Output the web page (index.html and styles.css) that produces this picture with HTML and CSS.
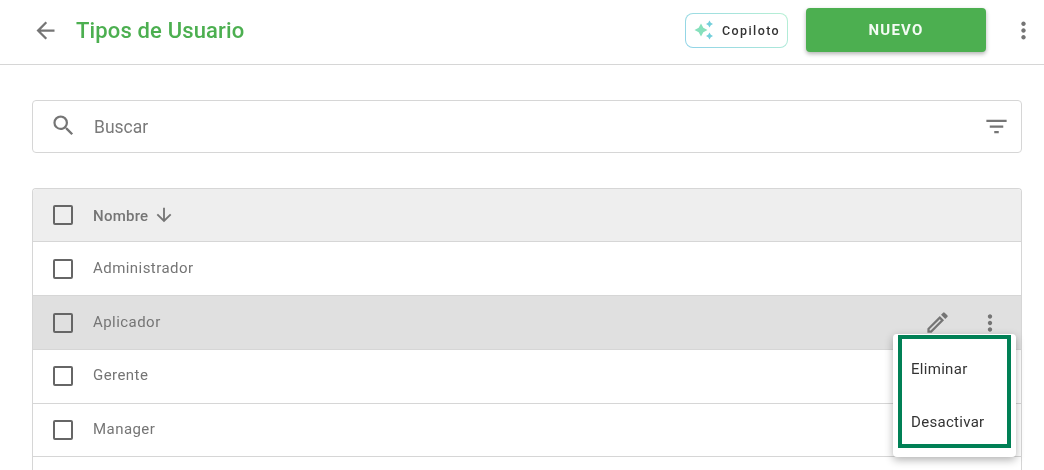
FILE: index.html
```html
<!DOCTYPE html>
<html>

<head>
  <meta charset="utf-8">
  <meta name="viewport" content="width=device-width">
  <title>Tipos de Usuario</title>
  <link rel="stylesheet" href="styles.css">
</head>

<body>

  <header class="topbar">
    <svg class="back-icon" width="27" height="27" viewBox="0 0 24 24">
      <path d="M20 11H7.83l5.59-5.59L12 4l-8 8 8 8 1.41-1.41L7.83 13H20v-2z" />
    </svg>
    <h1 class="title">Tipos de Usuario</h1>
    <button class="copilot">
      <svg width="22" height="22" viewBox="0 0 22 22">
        <path fill="#86e0bc" d="M8 4.5 10.3 8.7 14.5 11 10.3 13.3 8 17.5 5.7 13.3 1.5 11 5.7 8.7z" />
        <path fill="#74cfdb" d="M16.5 1.5 17.8 3.7 20 5 17.8 6.3 16.5 8.5 15.2 6.3 13 5 15.2 3.7z" />
        <path fill="#74cfdb" d="M16.5 13.5 17.8 15.7 20 17 17.8 18.3 16.5 20.5 15.2 18.3 13 17 15.2 15.7z" />
      </svg>
      <span>Copiloto</span>
    </button>
    <button class="btn-new">NUEVO</button>
    <svg class="more-icon" width="27" height="27" viewBox="0 0 24 24">
      <path d="M12 8c1.1 0 2-.9 2-2s-.9-2-2-2-2 .9-2 2 .9 2 2 2zm0 2c-1.1 0-2 .9-2 2s.9 2 2 2 2-.9 2-2-.9-2-2-2zm0 6c-1.1 0-2 .9-2 2s.9 2 2 2 2-.9 2-2-.9-2-2-2z" />
    </svg>
  </header>

  <main class="content">
    <div class="search">
      <svg class="search-icon" width="27" height="27" viewBox="0 0 24 24">
        <path d="M15.5 14h-.79l-.28-.27A6.47 6.47 0 0 0 16 9.5 6.5 6.5 0 1 0 9.5 16c1.61 0 3.09-.59 4.23-1.57l.27.28v.79l5 4.99L20.49 19l-4.99-5zm-6 0C7.01 14 5 11.99 5 9.5S7.01 5 9.5 5 14 7.01 14 9.5 11.99 14 9.5 14z" />
      </svg>
      <span class="search-text">Buscar</span>
      <svg class="filter-icon" width="27" height="27" viewBox="0 0 24 24">
        <path d="M10 18h4v-2h-4v2zM3 6v2h18V6H3zm3 7h12v-2H6v2z" />
      </svg>
    </div>

    <div class="table">
      <div class="row row-head">
        <span class="check"></span>
        <span class="cell-head">Nombre</span>
        <svg class="sort-icon" width="22" height="22" viewBox="0 0 24 24">
          <path d="M20 12l-1.41-1.41L13 16.17V4h-2v12.17l-5.58-5.59L4 12l8 8 8-8z" />
        </svg>
      </div>
      <div class="row">
        <span class="check"></span>
        <span class="cell">Administrador</span>
      </div>
      <div class="row row-active">
        <span class="check"></span>
        <span class="cell">Aplicador</span>
        <div class="row-actions">
          <svg width="27" height="27" viewBox="0 0 24 24">
            <path d="M3 17.25V21h3.75L17.81 9.94l-3.75-3.75L3 17.25zM5.92 19H5v-.92l9.06-9.06.92.92L5.92 19zM20.71 7.04a1 1 0 0 0 0-1.41l-2.34-2.34a1 1 0 0 0-1.41 0l-1.83 1.83 3.75 3.75 1.83-1.83z" />
          </svg>
          <svg width="26" height="26" viewBox="0 0 24 24">
            <path d="M12 8c1.1 0 2-.9 2-2s-.9-2-2-2-2 .9-2 2 .9 2 2 2zm0 2c-1.1 0-2 .9-2 2s.9 2 2 2 2-.9 2-2-.9-2-2-2zm0 6c-1.1 0-2 .9-2 2s.9 2 2 2 2-.9 2-2-.9-2-2-2z" />
          </svg>
        </div>
      </div>
      <div class="row">
        <span class="check"></span>
        <span class="cell">Gerente</span>
      </div>
      <div class="row">
        <span class="check"></span>
        <span class="cell">Manager</span>
      </div>
      <div class="row row-cut"></div>
    </div>
  </main>

  <div class="menu">
    <div class="menu-mark">
      <div class="menu-item">Eliminar</div>
      <div class="menu-item">Desactivar</div>
    </div>
  </div>

</body>

</html>
```

FILE: styles.css
```css
html,
body {
  height: 470px;
  overflow: hidden;
}

body {
  margin: 0;
  background: #ffffff;
  font-family: Roboto, "Liberation Sans", sans-serif;
  color: #757575;
  position: relative;
}

svg {
  display: block;
  flex: none;
  fill: #757575;
}

/* own layers, so the text is smoothed in grey */
.topbar,
.content,
.menu-mark {
  will-change: transform;
}

.topbar {
  height: 60px;
  border-bottom: 1px solid #d6d6d6;
  display: flex;
  align-items: center;
  padding: 0 7px 4px 32px;
}

.title {
  margin: 0 0 0 17px;
  flex: 1;
  font-size: 22px;
  font-weight: 500;
  letter-spacing: 0.15px;
  color: #4caf50;
}

.copilot {
  width: 103px;
  height: 35px;
  margin: 0 18px 0 0;
  padding: 0 0 0 7px;
  display: flex;
  align-items: center;
  gap: 7px;
  background: linear-gradient(#ffffff, #ffffff) padding-box,
    linear-gradient(45deg, #8fd3e8, #b8f0d4) border-box;
  border: 1px solid transparent;
  border-radius: 8px;
  font-family: inherit;
  font-size: 12.5px;
  font-weight: 500;
  letter-spacing: 1.4px;
  color: #333333;
}

.btn-new {
  width: 180px;
  height: 44px;
  margin: 0 24px 0 0;
  padding: 0;
  background: #4caf50;
  border: none;
  border-radius: 4px;
  box-shadow: 0 2px 4px rgba(0, 0, 0, 0.3);
  font-family: inherit;
  font-size: 15px;
  font-weight: 700;
  letter-spacing: 1.2px;
  color: #f4fbf4;
}

.content {
  padding: 35px 22px 0 32px;
}

.search {
  height: 51px;
  border: 1px solid #d6d6d6;
  border-radius: 4px;
  display: flex;
  align-items: center;
  padding: 0 11.5px 0 17px;
}

.search-icon {
  margin-bottom: 2px;
}

.search-text {
  flex: 1;
  margin-left: 17px;
  font-size: 17.5px;
  color: #7a7a7a;
}

.filter-icon {
  margin-bottom: 1px;
}

.table {
  margin-top: 35px;
  border: 1px solid #d6d6d6;
  border-bottom: none;
  border-radius: 4px 4px 0 0;
}

.row {
  height: 52.75px;
  border-bottom: 1px solid #d6d6d6;
  display: flex;
  align-items: center;
  padding-left: 20px;
}

.row-head {
  height: 52.4px;
  background: #eeeeee;
  border-radius: 4px 4px 0 0;
}

.row-active {
  background: #e0e0e0;
}

.row-cut {
  height: 12.5px;
  border-bottom: none;
}

.check {
  width: 16px;
  height: 16px;
  border: 2px solid #666666;
  border-radius: 2px;
  flex: none;
}

.cell,
.cell-head {
  margin-left: 20px;
  font-size: 15px;
  letter-spacing: 0.45px;
  color: #757575;
}

.cell {
  margin-bottom: 2px;
}

.cell-head {
  margin-top: 2px;
  font-weight: 500;
  letter-spacing: 0.25px;
}

.sort-icon {
  margin-left: 5px;
}

.row-actions {
  margin-left: auto;
  padding-right: 18px;
  display: flex;
  align-items: center;
  gap: 26px;
}

.menu {
  position: absolute;
  left: 893px;
  top: 334px;
  width: 123px;
  height: 123px;
  box-sizing: border-box;
  padding: 1px 5px 0;
  background: #ffffff;
  border-radius: 4px;
  box-shadow: 0 3px 8px rgba(0, 0, 0, 0.3);
}

.menu-mark {
  height: 113px;
  box-sizing: border-box;
  padding-top: 3px;
  border: 4px solid #008055;
}

.menu-item {
  height: 53px;
  padding-left: 9px;
  display: flex;
  align-items: center;
  font-size: 15px;
  letter-spacing: 0.3px;
  color: #333333;
}
```
